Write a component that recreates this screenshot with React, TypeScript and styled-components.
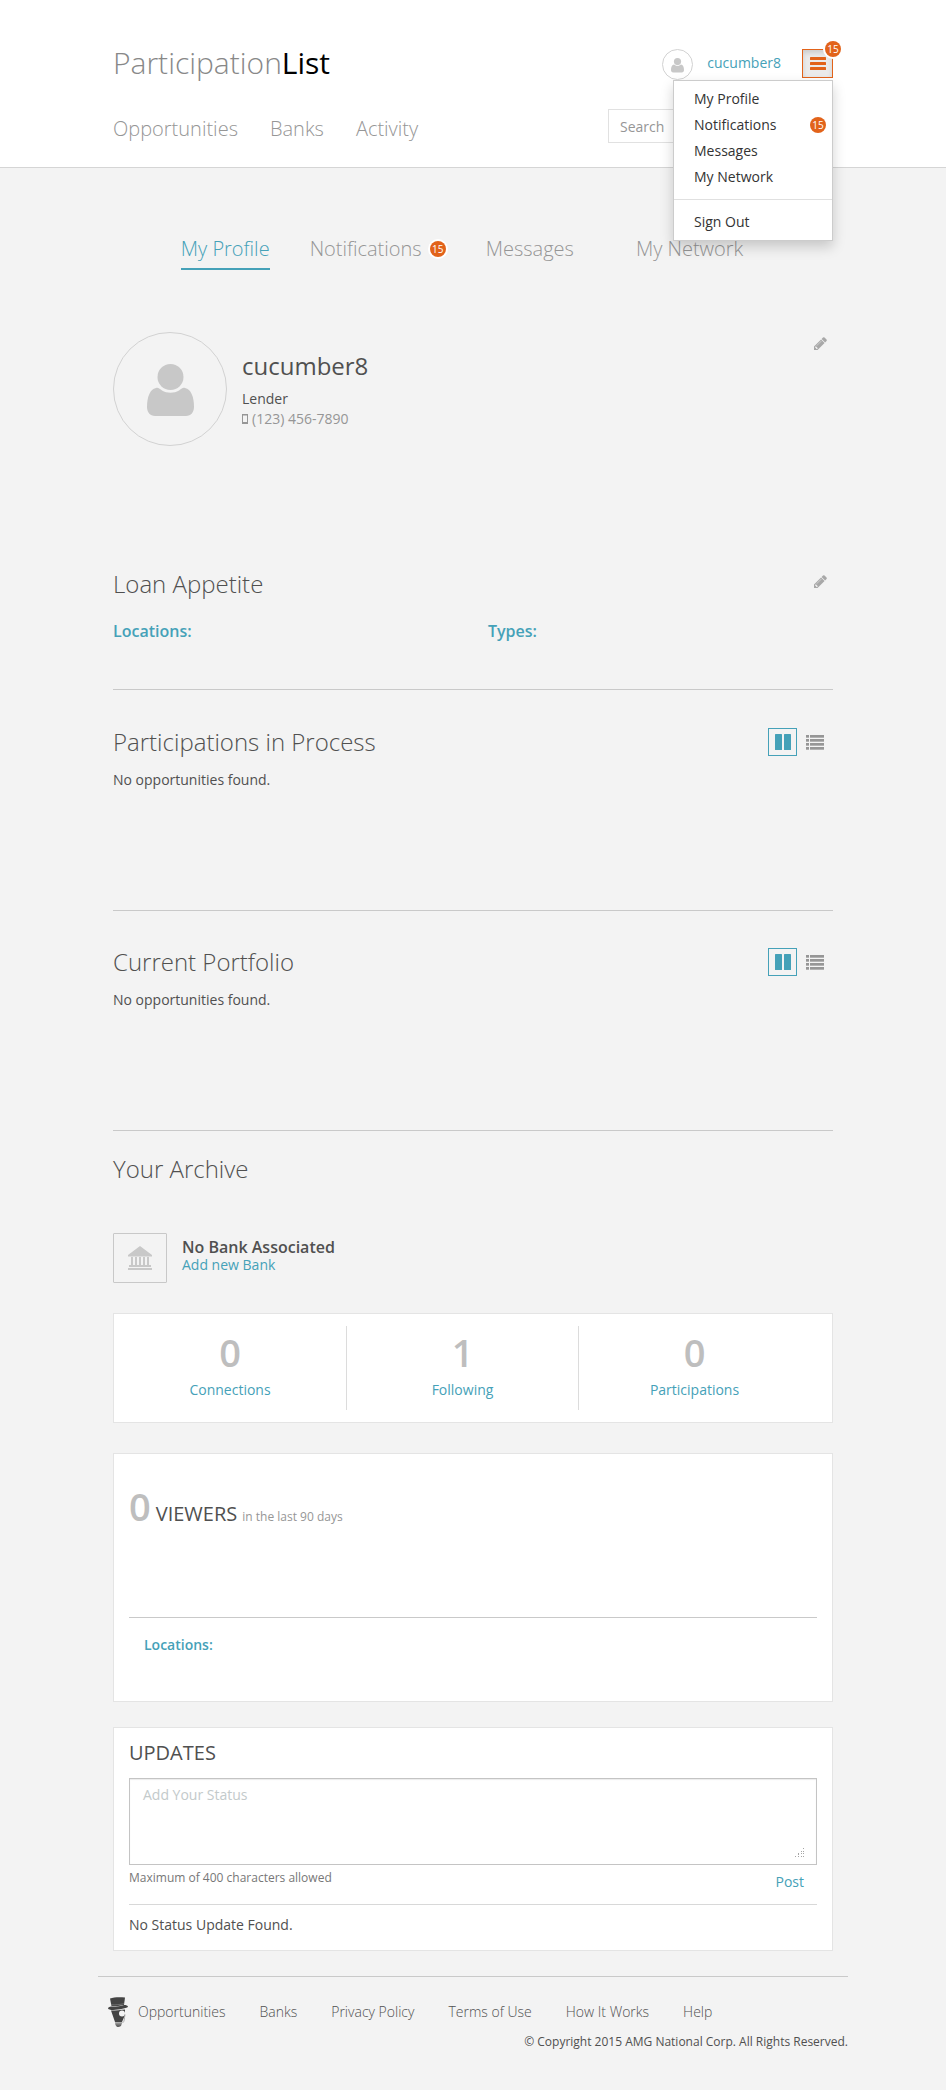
import React from "react";
import styled, { createGlobalStyle, css } from "styled-components";

const teal = "#45a1b8";
const orange = "#e2631a";
const dark = "#505050";
const muted = "#969696";
const line = "#c9c9c9";

const GlobalStyle = createGlobalStyle`
  * { box-sizing: border-box; }
  body {
    margin: 0;
    background: #f3f3f3;
    color: ${dark};
    font: 400 14px/20px "Open Sans", sans-serif;
  }
  h1, h2, h3, p, ul { margin: 0; padding: 0; font-weight: inherit; }
  ul { list-style: none; }
  a { color: inherit; text-decoration: none; }
  button { font: inherit; cursor: pointer; }
`;

const Container = styled.div`
  max-width: 750px;
  margin: 0 auto;
  padding: 0 15px;
`;

const Header = styled.header`
  background: #fff;
  border-bottom: 1px solid #d5d5d5;
`;

const HeaderRow = styled.div`
  display: flex;
  justify-content: space-between;
  align-items: flex-start;
`;

const BrandRow = styled(HeaderRow)`
  padding-top: 42px;
`;

const NavRow = styled(HeaderRow)`
  padding: 26px 0 24px;
`;

const Brand = styled.a`
  font-size: 30px;
  line-height: 41px;
  font-weight: 300;
  color: #888;
  strong { font-weight: 400; color: #000; }
`;

const MainNav = styled.nav`
  display: flex;
  gap: 32px;
  padding-top: 6px;
  font-size: 20px;
  line-height: 27px;
  font-weight: 300;
  color: ${muted};
`;

const Account = styled.div`
  position: relative;
  display: flex;
  align-items: flex-start;
  padding-top: 7px;
`;

const Avatar = styled.span<{ $size: number; $icon: number }>`
  display: flex;
  flex: none;
  align-items: center;
  justify-content: center;
  width: ${p => p.$size}px;
  height: ${p => p.$size}px;
  padding-top: 2px;
  border: 1px solid #d2d2d2;
  border-radius: 50%;
  svg { width: ${p => p.$icon}px; height: auto; fill: #c8c8c8; }
`;

const UserLink = styled.a`
  margin: 4px 21px 0 14px;
  color: ${teal};
`;

const MenuButton = styled.button`
  display: flex;
  align-items: center;
  justify-content: center;
  width: 31px;
  height: 29px;
  padding: 0;
  border: 1px solid ${orange};
  background: #ebebeb;
  box-shadow: inset 0 3px 5px rgba(0, 0, 0, 0.13);
  svg { fill: ${orange}; }
`;

const Badge = styled.span<{ $ring?: boolean }>`
  display: inline-block;
  flex: none;
  width: 16px;
  height: 16px;
  border-radius: 50%;
  background: ${orange};
  color: #fff;
  font-size: 10px;
  line-height: 16px;
  font-weight: 400;
  text-align: center;
  ${p => p.$ring && css`box-shadow: 0 0 0 2px #fff;`}
`;

const CornerBadge = styled(Badge)`
  position: absolute;
  top: -1px;
  right: -8px;
`;

const Menu = styled.div`
  position: absolute;
  z-index: 2;
  top: 38px;
  right: 0;
  width: 160px;
  background: #fff;
  border: 1px solid #ccc;
  box-shadow: 0 6px 12px rgba(0, 0, 0, 0.18);
  color: #333;
`;

const MenuGroup = styled.ul`
  padding: 5px 0 9px;
  & + & {
    border-top: 1px solid #e0e0e0;
    padding: 9px 0 5px;
  }
`;

const MenuItem = styled.a`
  display: flex;
  align-items: center;
  justify-content: space-between;
  padding: 3px 6px 3px 20px;
`;

const SearchBox = styled.input`
  width: 225px;
  height: 34px;
  padding: 0 11px;
  border: 1px solid #e1e1e1;
  background: #fff;
  font: inherit;
  color: ${dark};
  &::placeholder { color: ${muted}; opacity: 1; }
`;

const Tabs = styled.nav`
  display: flex;
  justify-content: center;
  gap: 40px;
  padding-top: 67px;
`;

const Tab = styled.a<{ $active?: boolean; $slot?: boolean }>`
  display: flex;
  align-items: center;
  gap: 8px;
  padding: 0 ${p => (p.$slot ? 22 : 0)}px 6px 0;
  border-bottom: 2px solid ${p => (p.$active ? teal : "transparent")};
  color: ${p => (p.$active ? teal : muted)};
  font-size: 20px;
  line-height: 27px;
  font-weight: 300;
`;

const Profile = styled.section`
  display: flex;
  gap: 15px;
  margin-top: 62px;
`;

const ProfileText = styled.div`
  flex: 1;
  padding-top: 17px;
`;

const ProfileName = styled.h1`
  margin-bottom: 7px;
  font-size: 24px;
  line-height: 33px;
`;

const Phone = styled.p`
  display: flex;
  align-items: center;
  gap: 4px;
  color: ${muted};
`;

const EditButton = styled.button<{ $top: number }>`
  display: block;
  height: 13px;
  padding: 0;
  margin: ${p => p.$top}px 6px 0 0;
  border: 0;
  background: none;
  svg { display: block; fill: #a8a8a8; }
`;

const Section = styled.section<{ $top: number; $bottom: number }>`
  padding: ${p => p.$top}px 0 ${p => p.$bottom}px;
  border-bottom: 1px solid ${line};
`;

const SectionHead = styled.div`
  display: flex;
  justify-content: space-between;
  height: 33px;
`;

const Heading = styled.h2`
  font-size: 24px;
  line-height: 33px;
  font-weight: 300;
`;

const Columns = styled.div`
  display: grid;
  grid-template-columns: 1fr 1fr;
  column-gap: 30px;
  margin-top: 20px;
`;

const Label = styled.h3<{ $small?: boolean }>`
  color: ${teal};
  font-size: ${p => (p.$small ? 14 : 16)}px;
  line-height: 22px;
  font-weight: 600;
`;

const Empty = styled.p<{ $gap: number }>`
  margin-top: ${p => p.$gap}px;
`;

const ViewSwitch = styled.div`
  display: flex;
  margin-top: 3px;
`;

const ViewButton = styled.button<{ $active?: boolean }>`
  display: flex;
  align-items: center;
  justify-content: center;
  width: ${p => (p.$active ? 29 : 36)}px;
  height: 28px;
  padding: 0;
  border: 1px solid ${p => (p.$active ? teal : "transparent")};
  background: none;
  svg { fill: ${p => (p.$active ? teal : muted)}; }
`;

const Archive = styled.section`
  padding-top: 21px;
`;

const Bank = styled.section`
  display: flex;
  gap: 15px;
  margin-top: 48px;
`;

const BankLogo = styled.span`
  display: flex;
  align-items: center;
  justify-content: center;
  width: 54px;
  height: 50px;
  border: 1px solid #c8c8c8;
  border-radius: 1px;
  svg { fill: #c8c8c8; }
`;

const BankText = styled.div`
  padding-top: 3px;
  a { display: block; line-height: 14px; color: ${teal}; }
`;

const BankName = styled.h3`
  font-size: 16px;
  line-height: 22px;
  font-weight: 600;
`;

const Card = styled.section<{ $gap: number }>`
  margin-top: ${p => p.$gap}px;
  padding: 0 15px;
  background: #fff;
  border: 1px solid #e4e4e4;
`;

const Stats = styled(Card)`
  display: grid;
  grid-template-columns: repeat(3, 1fr);
  padding: 12px 22px 12px 0;
`;

const Stat = styled.a`
  display: flex;
  flex-direction: column;
  align-items: center;
  gap: 2px;
  height: 84px;
  color: ${teal};
  & + & { border-left: 1px solid #dcdcdc; }
`;

const BigNumber = styled.span`
  color: #bebebe;
  font-size: 38px;
  line-height: 52px;
  font-weight: 600;
`;

const Viewers = styled.div`
  display: flex;
  align-items: baseline;
  gap: 5px;
  padding: 26px 0 85px;
  border-bottom: 1px solid ${line};
`;

const CardTitle = styled.h2`
  font-size: 20px;
  line-height: 27px;
`;

const Small = styled.span<{ $tone?: string }>`
  color: ${p => p.$tone || muted};
  font-size: 12px;
  line-height: 16px;
`;

const ViewerPlaces = styled.div`
  padding: 16px 15px 45px;
`;

const Updates = styled(Card)`
  padding-top: 11px;
  padding-bottom: 15px;
`;

const StatusField = styled.div`
  position: relative;
  margin-top: 12px;
  svg { position: absolute; right: 13px; bottom: 8px; fill: #a5a5a5; }
`;

const StatusBox = styled.textarea`
  display: block;
  width: 100%;
  height: 87px;
  padding: 6px 13px;
  border: 1px solid #c4c4c4;
  box-shadow: inset 0 1px 1px rgba(0, 0, 0, 0.08);
  font: inherit;
  color: ${dark};
  resize: none;
  &::placeholder { color: #c3cacb; opacity: 1; }
`;

const PostRow = styled.div`
  display: flex;
  justify-content: space-between;
  align-items: flex-start;
  height: 40px;
  padding-top: 5px;
  border-bottom: 1px solid #d8d8d8;
`;

const PostButton = styled.button`
  margin-top: 2px;
  padding: 0 13px;
  border: 0;
  background: none;
  color: ${teal};
`;

const Footer = styled.footer`
  max-width: 750px;
  margin: 25px auto 0;
  padding-bottom: 36px;
  border-top: 1px solid ${line};
  text-align: right;
`;

const FooterNav = styled.nav`
  display: flex;
  align-items: center;
  gap: 34px;
  height: 38px;
  margin: 16px 0 0 10px;
  font-weight: 300;
  a:first-of-type { margin-left: -24px; }
`;

const UserIcon = () => (
  <svg viewBox="0 0 47 52" width="47" height="52" aria-hidden="true">
    <circle cx="23.500" cy="13" r="13" />
    <path d="M9 24 C3 25 0 33 0 43 C0 48 3 52 8 52 H39 C44 52 47 48 47 43 C47 33 44 25 38 24 C36 23 34 25 32 26.500 C27 29.500 20 29.500 15 26.500 C13 25 11 23 9 24Z" />
  </svg>
);

const PencilIcon = () => (
  <svg viewBox="0 128 1536 1536" width="13" height="13" aria-hidden="true">
    <path d="M363 1536l91-91-235-235-91 91v107h128v128h107zm523-928q0-22-22-22-10 0-17 7l-542 542q-7 7-7 17 0 22 22 22 10 0 17-7l542-542q7-7 7-17zm-54-192l416 416-832 832H0v-416zm683 96q0 53-37 90l-166 166-416-416 166-165q36-38 90-38 53 0 91 38l235 234q37 39 37 91z" />
  </svg>
);

const BarsIcon = () => (
  <svg width="16" height="13" aria-hidden="true">
    <rect width="16" height="3" rx="0.500" />
    <rect y="5" width="16" height="3" rx="0.500" />
    <rect y="10" width="16" height="3" rx="0.500" />
  </svg>
);

const ColumnsIcon = () => (
  <svg width="16" height="16" aria-hidden="true">
    <rect width="7" height="16" rx="0.500" />
    <rect x="9" width="7" height="16" rx="0.500" />
  </svg>
);

const ListIcon = () => (
  <svg width="18" height="15" aria-hidden="true">
    {[0, 4, 8, 12].map(y => (
      <g key={y}>
        <rect y={y} width="3" height="2.700" />
        <rect x="4" y={y} width="14" height="2.700" />
      </g>
    ))}
  </svg>
);

const BankIcon = () => (
  <svg width="24" height="24" aria-hidden="true">
    <path d="M12 0L24 9V10.500H0V9ZM3 11h2v8H3zM7 11h2v8H7zM11 11h2v8H11zM15 11h2v8H15zM19 11h2v8H19zM1 19h22v2H1zM0 22h24v2H0z" />
  </svg>
);

const PhoneIcon = () => (
  <svg width="6" height="10" aria-hidden="true">
    <path fill="#969696" fillRule="evenodd" d="M0 0h6v10H0zM1 1.500v6.500h4v-6.500z" />
  </svg>
);

const GripIcon = () => (
  <svg width="9" height="9" aria-hidden="true">
    <path d="M8 0h1v1H8zM8 3h1v1H8zM6 3h1v1H6zM8 5h1v1H8zM6 5h1v1H6zM3 5h1v1H3zM8 8h1v1H8zM6 8h1v1H6zM3 8h1v1H3zM0 8h1v1H0zM3 6h1v1H3z" />
  </svg>
);

const MascotIcon = () => (
  <svg viewBox="0 0 20 30" width="20" height="30" aria-hidden="true">
    <path fill="#444" d="M2 1.500C6 0 12 0 17 0.500L16 8C12 9 8 9 3.500 9Z" />
    <path fill="none" stroke="#888" strokeWidth="0.600" d="M3.500 7.800C8 8 12 7.500 16 6.700" />
    <path fill="#444" d="M0 11C1 9.500 3 9.500 4 9.500C9 9.500 13 9 16 8C18 8 20 8.500 20 10C16 12 9 13 3 13C1 12.500 0 12 0 11Z" />
    <path fill="#444" d="M3 13.500C8 13.500 13 13 17 12.500V18L14 25H7Z" />
    <path fill="#666" d="M7 25.500H14L13 29L11 30H9L7.500 28Z" />
    <circle cx="14" cy="16.500" r="3" fill="#f3f3f3" />
    <path d="M17 17.500C16 22 17 24 14.500 26" fill="none" stroke="#999" strokeWidth="0.800" />
    <path d="M7 26.800H13.500" stroke="#ccc" strokeWidth="0.600" />
  </svg>
);

const EmptyListSection = ({ title, top, bottom }: { title: string; top: number; bottom: number }) => (
  <Section $top={top} $bottom={bottom}>
    <SectionHead>
      <Heading>{title}</Heading>
      <ViewSwitch>
        <ViewButton $active aria-label="Column view"><ColumnsIcon /></ViewButton>
        <ViewButton aria-label="List view"><ListIcon /></ViewButton>
      </ViewSwitch>
    </SectionHead>
    <Empty $gap={12}>No opportunities found.</Empty>
  </Section>
);

const stats = [
  { value: 0, label: "Connections" },
  { value: 1, label: "Following" },
  { value: 0, label: "Participations" },
];

const footerLinks = ["Opportunities", "Banks", "Privacy Policy", "Terms of Use", "How It Works", "Help"];

export default function App() {
  return (
    <>
      <GlobalStyle />
      <Header>
        <Container>
          <BrandRow>
            <Brand href="#">Participation<strong>List</strong></Brand>
            <Account>
              <Avatar $size={31} $icon={13}><UserIcon /></Avatar>
              <UserLink href="#">cucumber8</UserLink>
              <MenuButton aria-label="Account menu"><BarsIcon /></MenuButton>
              <CornerBadge $ring>15</CornerBadge>
              <Menu>
                <MenuGroup>
                  <li><MenuItem href="#">My Profile</MenuItem></li>
                  <li><MenuItem href="#">Notifications <Badge>15</Badge></MenuItem></li>
                  <li><MenuItem href="#">Messages</MenuItem></li>
                  <li><MenuItem href="#">My Network</MenuItem></li>
                </MenuGroup>
                <MenuGroup>
                  <li><MenuItem href="#">Sign Out</MenuItem></li>
                </MenuGroup>
              </Menu>
            </Account>
          </BrandRow>
          <NavRow>
            <MainNav>
              <a href="#">Opportunities</a>
              <a href="#">Banks</a>
              <a href="#">Activity</a>
            </MainNav>
            <SearchBox type="text" placeholder="Search" aria-label="Search" />
          </NavRow>
        </Container>
      </Header>

      <Container as="main">
        <Tabs>
          <Tab href="#" $active>My Profile</Tab>
          <Tab href="#">Notifications <Badge $ring>15</Badge></Tab>
          <Tab href="#" $slot>Messages</Tab>
          <Tab href="#" $slot>My Network</Tab>
        </Tabs>

        <Profile>
          <Avatar $size={114} $icon={47}><UserIcon /></Avatar>
          <ProfileText>
            <ProfileName>cucumber8</ProfileName>
            <p>Lender</p>
            <Phone><PhoneIcon />(123) 456-7890</Phone>
          </ProfileText>
          <EditButton $top={5} aria-label="Edit profile"><PencilIcon /></EditButton>
        </Profile>

        <Section $top={121} $bottom={47}>
          <SectionHead>
            <Heading>Loan Appetite</Heading>
            <EditButton $top={8} aria-label="Edit loan appetite"><PencilIcon /></EditButton>
          </SectionHead>
          <Columns>
            <Label>Locations:</Label>
            <Label>Types:</Label>
          </Columns>
        </Section>

        <EmptyListSection title="Participations in Process" top={35} bottom={120} />
        <EmptyListSection title="Current Portfolio" top={34} bottom={120} />

        <Archive>
          <Heading>Your Archive</Heading>
        </Archive>

        <Bank>
          <BankLogo><BankIcon /></BankLogo>
          <BankText>
            <BankName>No Bank Associated</BankName>
            <a href="#">Add new Bank</a>
          </BankText>
        </Bank>

        <Stats $gap={30}>
          {stats.map(s => (
            <Stat key={s.label} href="#">
              <BigNumber>{s.value}</BigNumber>
              {s.label}
            </Stat>
          ))}
        </Stats>

        <Card $gap={30}>
          <Viewers>
            <BigNumber>0</BigNumber>
            <CardTitle>VIEWERS</CardTitle>
            <Small>in the last 90 days</Small>
          </Viewers>
          <ViewerPlaces>
            <Label $small>Locations:</Label>
          </ViewerPlaces>
        </Card>

        <Updates $gap={25}>
          <CardTitle>UPDATES</CardTitle>
          <StatusField>
            <StatusBox placeholder="Add Your Status" aria-label="Add Your Status" />
            <GripIcon />
          </StatusField>
          <PostRow>
            <Small $tone="#777">Maximum of 400 characters allowed</Small>
            <PostButton>Post</PostButton>
          </PostRow>
          <Empty $gap={10}>No Status Update Found.</Empty>
        </Updates>
      </Container>

      <Footer>
        <FooterNav>
          <MascotIcon />
          {footerLinks.map(l => <a key={l} href="#">{l}</a>)}
        </FooterNav>
        <Small $tone={dark}>© Copyright 2015 AMG National Corp. All Rights Reserved.</Small>
      </Footer>
    </>
  );
}
